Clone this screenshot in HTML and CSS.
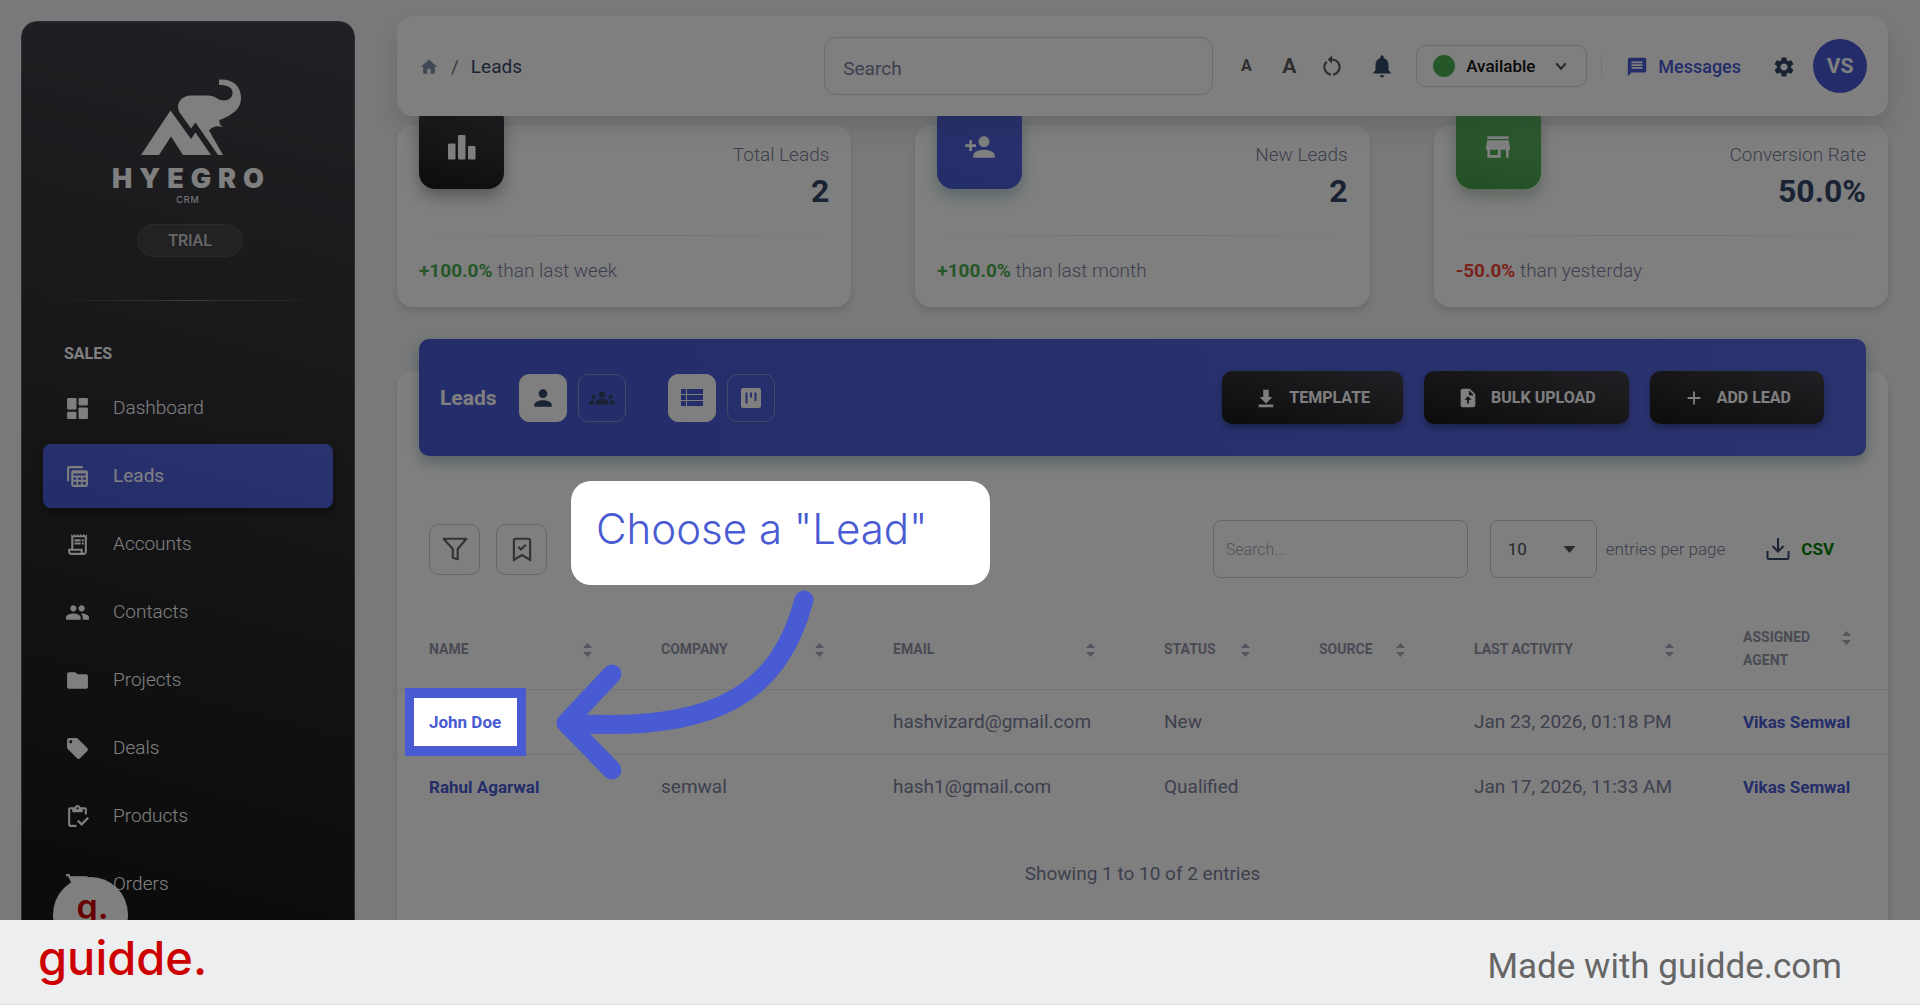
FILE: index.html
```html
<!DOCTYPE html>
<html lang="en">
<head>
<meta charset="utf-8">
<meta name="viewport" content="width=device-width, initial-scale=1">
<title>Leads - Hyegro CRM</title>
<link rel="stylesheet" href="styles.css">
</head>
<body>
<svg class="symbols" aria-hidden="true">
  <symbol id="sort" viewBox="0 0 9 14"><path d="M4.500 0 9 5H0zM4.500 14 0 9h9z"/></symbol>
</svg>
<div class="stage">
  <div class="app">
    <aside class="sidebar">
      <div class="brand">
        <svg class="brand-mark" viewBox="0 0 102 78" aria-hidden="true">
          <path d="M30.500 31.500 51 60l4.500-6.500L71 76H43L31 57.500 19 76H1z"/>
          <path d="M79 .5c13-1 22 6 22 18 0 11-7 17-21.500 22.500-.5 3 .5 5 3.500 7-6-1.500-9.500-1.500-14 3.500L83 76h-5L55.500 43.500 51 49.500 40 34c-5-8 0-17 11-17.500h17c8 0 9 5 16 5 6.500-.5 9-5 8.500-8.500-.5-4.500-5-7-13.500-7z"/>
        </svg>
        <div class="brand-name">HYEGRO</div>
        <div class="brand-sub">CRM</div>
        <span class="plan">TRIAL</span>
      </div>
      <div class="side-rule"></div>
      <div class="side-title">SALES</div>
      <nav class="menu">
        <a href="#"><svg viewBox="0 0 24 24"><rect x="2" y="2" width="9" height="11" rx="1"/><rect x="13" y="2" width="9" height="7" rx="1"/><rect x="2" y="15" width="9" height="7" rx="1"/><rect x="13" y="11" width="9" height="11" rx="1"/></svg>Dashboard</a>
        <a href="#" class="active"><svg viewBox="0 0 24 24"><path d="M3 16.500V4a1 1 0 0 1 1-1h13" fill="none" stroke="currentColor" stroke-width="2"/><path fill-rule="evenodd" d="M8 6h12a2 2 0 0 1 2 2v12a2 2 0 0 1-2 2H8a2 2 0 0 1-2-2V8c0-1.100.9-2 2-2zm0 3v2h12V9zm0 4v2h3v-2zm4.500 0v2h3v-2zm4.500 0v2h3v-2zm-9 4v3h3v-3zm4.500 0v3h3v-3zm4.500 0v3h3v-3z"/></svg>Leads</a>
        <a href="#"><svg viewBox="0 0 24 24"><path d="M19.500 3.500 18 2l-1.500 1.500L15 2l-1.500 1.500L12 2l-1.500 1.500L9 2 7.500 3.500 6 2v14H3v3c0 1.660 1.340 3 3 3h12c1.660 0 3-1.340 3-3V2l-1.500 1.500zM15 20H6c-.55 0-1-.45-1-1v-1h10v2zm4-1c0 .55-.45 1-1 1s-1-.45-1-1v-3H8V5h11v14z"/><path d="M9 7h6v2H9zM16 7h2v2h-2zM9 10h6v2H9zM16 10h2v2h-2z"/></svg>Accounts</a>
        <a href="#"><svg viewBox="0 0 24 24"><path d="M16 11c1.660 0 3-1.340 3-3s-1.340-3-3-3-3 1.340-3 3 1.340 3 3 3zm-8 0c1.660 0 3-1.340 3-3S9.660 5 8 5 5 6.340 5 8s1.340 3 3 3zm0 2c-2.330 0-7 1.170-7 3.500V19h14v-2.500c0-2.330-4.670-3.500-7-3.500zm8 0c-.29 0-.62.02-.97.05 1.160.84 1.970 1.970 1.970 3.450V19h6v-2.500c0-2.330-4.670-3.500-7-3.500z"/></svg>Contacts</a>
        <a href="#"><svg viewBox="0 0 24 24"><path d="M10 4H4c-1.100 0-2 .9-2 2v12c0 1.100.9 2 2 2h16c1.100 0 2-.9 2-2V8c0-1.100-.9-2-2-2h-8l-2-2z"/></svg>Projects</a>
        <a href="#"><svg viewBox="0 0 24 24"><path d="M21.410 11.580l-9-9C12.050 2.220 11.550 2 11 2H4c-1.100 0-2 .9-2 2v7c0 .55.22 1.050.59 1.420l9 9c.36.36.86.58 1.410.58s1.050-.22 1.410-.59l7-7c.37-.36.59-.86.59-1.410s-.23-1.060-.59-1.420zM5.500 7C4.670 7 4 6.330 4 5.500S4.670 4 5.500 4 7 4.670 7 5.500 6.330 7 5.500 7z"/></svg>Deals</a>
        <a href="#"><svg viewBox="0 0 24 24"><path d="M5 5h2v3h10V5h2v5h2V5c0-1.100-.9-2-2-2h-4.180C14.400 1.840 13.300 1 12 1s-2.400.84-2.820 2H5c-1.100 0-2 .9-2 2v15c0 1.100.9 2 2 2h6v-2H5V5zm7-2c.55 0 1 .45 1 1s-.45 1-1 1-1-.45-1-1 .45-1 1-1zM21.500 12.500 16 18l-3-3-1.500 1.500L16 21l7-7z"/></svg>Products</a>
        <a href="#"><svg viewBox="0 0 24 24"><path d="M7 18c-1.100 0-2 .9-2 2s.9 2 2 2 2-.9 2-2-.9-2-2-2zM1 2v2h2l3.600 7.590-1.350 2.450C4.520 15.370 5.480 17 7 17h12v-2H7.420l1.130-2h7.450c.75 0 1.410-.41 1.750-1.030L22 4H5.210L4.270 2zm16 16c-1.100 0-2 .9-2 2s.9 2 2 2 2-.9 2-2-.9-2-2-2z"/></svg>Orders</a>
      </nav>
    </aside>

    <main class="main">
      <header class="topbar">
        <nav class="crumbs">
          <a href="#" aria-label="Home"><svg viewBox="0 0 24 24" class="i20"><path d="M10 20v-6h4v6h5v-8h3L12 3 2 12h3v8z"/></svg></a>
          <span class="slash">/</span>
          <span>Leads</span>
        </nav>
        <input class="search" type="search" placeholder="Search" aria-label="Search">
        <div class="tools">
          <button class="font-small" aria-label="Decrease text size">A</button>
          <button class="font-large" aria-label="Increase text size">A</button>
          <button class="reset" aria-label="Reset text size"><svg viewBox="0 0 24 24" class="i26"><path d="M12 5V2L8 6l4 4V7c3.310 0 6 2.690 6 6 0 2.970-2.170 5.430-5 5.910v2.020c3.950-.49 7-3.850 7-7.930 0-4.420-3.580-8-8-8zm-6 8c0-1.650.67-3.150 1.760-4.240L6.340 7.340C4.900 8.790 4 10.790 4 13c0 4.080 3.050 7.440 7 7.930v-2.020c-2.830-.48-5-2.940-5-5.910z"/></svg></button>
          <button class="navy" aria-label="Notifications"><svg viewBox="0 0 24 24" class="i26"><path d="M12 22.500c1.100 0 2-.9 2-2h-4c0 1.100.89 2 2 2zm6-6.500v-5c0-3.070-1.640-5.640-4.500-6.320V3.500c0-.83-.67-1.500-1.500-1.500s-1.500.67-1.500 1.500v1.180C7.630 5.360 6 7.920 6 11v5l-2 2v1h16v-1l-2-2z"/></svg></button>
        </div>
        <button class="status"><span class="dot"></span>Available<svg viewBox="0 0 24 24" class="i20"><path d="M5 8l7 8 7-8" fill="none" stroke="currentColor" stroke-width="3"/></svg></button>
        <span class="bar-rule"></span>
        <a href="#" class="messages"><svg viewBox="0 0 24 24" class="i22"><path d="M20 2H4c-1.100 0-2 .9-2 2v18l4-4h14c1.100 0 2-.9 2-2V4c0-1.100-.9-2-2-2zm-2 12H6v-2h12v2zm0-3H6V9h12v2zm0-3H6V6h12v2z"/></svg>Messages</a>
        <button class="navy gear" aria-label="Settings"><svg viewBox="0 0 24 24" class="i24"><path d="M19.140 12.940c.04-.3.06-.61.06-.94 0-.32-.02-.64-.07-.94l2.030-1.580c.18-.14.23-.41.12-.61l-1.920-3.320c-.12-.22-.37-.29-.59-.22l-2.390.96c-.5-.38-1.030-.7-1.620-.94l-.36-2.540c-.04-.24-.24-.41-.48-.41h-3.840c-.24 0-.43.17-.47.41l-.36 2.540c-.59.24-1.130.57-1.620.94l-2.390-.96c-.22-.08-.47 0-.59.22L2.740 8.870c-.12.21-.08.47.12.61l2.030 1.580c-.05.3-.09.63-.09.94s.02.64.07.94l-2.030 1.580c-.18.14-.23.41-.12.61l1.920 3.320c.12.22.37.29.59.22l2.390-.96c.5.38 1.030.7 1.620.94l.36 2.540c.05.24.24.41.48.41h3.840c.24 0 .44-.17.47-.41l.36-2.540c.59-.24 1.130-.56 1.620-.94l2.390.96c.22.08.47 0 .59-.22l1.920-3.320c.12-.22.07-.47-.12-.61l-2.010-1.580zM12 15.600c-1.980 0-3.600-1.620-3.600-3.600s1.620-3.600 3.600-3.600 3.600 1.620 3.600 3.600-1.620 3.600-3.600 3.600z"/></svg></button>
        <button class="avatar">VS</button>
      </header>

      <section class="stats">
        <article class="stat">
          <div class="stat-top">
            <span class="stat-icon dark"><svg viewBox="0 0 28 28"><rect x="0" y="10.500" width="7.500" height="16" rx="1"/><rect x="10" y="2" width="7.500" height="24.500" rx="1"/><rect x="20" y="13" width="7.500" height="13.500" rx="1"/></svg></span>
            <div class="stat-text"><span class="stat-label">Total Leads</span><strong>2</strong></div>
          </div>
          <div class="stat-rule"></div>
          <p><b class="up">+100.0%</b> than last week</p>
        </article>
        <article class="stat">
          <div class="stat-top">
            <span class="stat-icon blue"><svg viewBox="0 0 24 24" class="i32"><path d="M15 12c2.210 0 4-1.790 4-4s-1.790-4-4-4-4 1.790-4 4 1.790 4 4 4zm-9-2V7H4v3H1v2h3v3h2v-3h3v-2H6zm9 4c-2.670 0-8 1.340-8 4v2h16v-2c0-2.660-5.330-4-8-4z"/></svg></span>
            <div class="stat-text"><span class="stat-label">New Leads</span><strong>2</strong></div>
          </div>
          <div class="stat-rule"></div>
          <p><b class="up">+100.0%</b> than last month</p>
        </article>
        <article class="stat">
          <div class="stat-top">
            <span class="stat-icon green"><svg viewBox="0 0 24 24" class="i32"><path d="M20 4H4v2h16V4zm1 10v-2l-1-5H4l-1 5v2h1v6h10v-6h4v6h2v-6h1zm-9 4H6v-4h6v4z"/></svg></span>
            <div class="stat-text"><span class="stat-label">Conversion Rate</span><strong>50.0%</strong></div>
          </div>
          <div class="stat-rule"></div>
          <p><b class="down">-50.0%</b> than yesterday</p>
        </article>
      </section>

      <section class="panel">
        <div class="banner">
          <h1>Leads</h1>
          <div class="toggle">
            <button class="tile on" aria-label="My leads"><svg viewBox="0 0 24 24" class="i26"><path d="M12 12c2.210 0 4-1.790 4-4s-1.790-4-4-4-4 1.790-4 4 1.790 4 4 4zm0 2c-2.670 0-8 1.340-8 4v2h16v-2c0-2.660-5.330-4-8-4z"/></svg></button>
            <button class="tile" aria-label="Team leads"><svg viewBox="0 0 24 24" class="i26"><path d="M12 12.750c1.630 0 3.070.39 4.240.9 1.080.48 1.760 1.560 1.760 2.730V18H6v-1.610c0-1.180.68-2.260 1.760-2.730 1.170-.52 2.610-.91 4.240-.91zM4 13c1.100 0 2-.9 2-2s-.9-2-2-2-2 .9-2 2 .9 2 2 2zm1.130 1.100C4.760 14.040 4.390 14 4 14c-.99 0-1.930.21-2.780.58C.48 14.900 0 15.620 0 16.430V18h4.500v-1.610c0-.83.23-1.610.63-2.290zM20 13c1.100 0 2-.9 2-2s-.9-2-2-2-2 .9-2 2 .9 2 2 2zm4 3.430c0-.81-.48-1.530-1.220-1.850-.85-.37-1.790-.58-2.780-.58-.39 0-.76.04-1.130.1.4.68.63 1.460.63 2.290V18H24v-1.570zM12 6c1.660 0 3 1.340 3 3s-1.340 3-3 3-3-1.340-3-3 1.340-3 3-3z"/></svg></button>
          </div>
          <div class="toggle">
            <button class="tile on list" aria-label="List view"><svg viewBox="0 0 22 18" class="list-icon"><path d="M0 0h5v5H0zM6 0h16v5H6zM0 6h5v5H0zM6 6h16v5H6zM0 12h5v5H0zM6 12h16v5H6z"/></svg></button>
            <button class="tile board" aria-label="Board view"><svg viewBox="0 0 20 20" class="i20"><path fill-rule="evenodd" d="M2 0h16a2 2 0 0 1 2 2v16a2 2 0 0 1-2 2H2a2 2 0 0 1-2-2V2C0 .9.900 0 2 0zm2.500 4.500v11h2v-11zm4.500 0v5h2v-5zm4.500 0v8.500h2V4.500z"/></svg></button>
          </div>
          <div class="actions">
            <button><svg viewBox="0 0 24 24" class="i22"><path d="M19 11h-4V3H9v8H5l7 7zM4 19h16v3H4z"/></svg>TEMPLATE</button>
            <button><svg viewBox="0 0 24 24" class="i22"><path fill-rule="evenodd" d="M14 2H6a2 2 0 0 0-2 2v16c0 1.100.9 2 2 2h12a2 2 0 0 0 2-2V8zm-1 7V3.500L18.500 9zM11 18v-4H8l4-4 4 4h-3v4z"/></svg>BULK UPLOAD</button>
            <button><svg viewBox="0 0 24 24" class="i22"><path d="M19 13h-6v6h-2v-6H5v-2h6V5h2v6h6z"/></svg>ADD LEAD</button>
          </div>
        </div>

        <div class="filters">
          <button class="outline" aria-label="Filter"><svg viewBox="0 0 24 24" class="i26"><path d="M1.500 2.500h21L14.500 12v9.500L10 20v-8z" fill="none" stroke="currentColor" stroke-width="2" stroke-linejoin="round"/></svg></button>
          <button class="outline" aria-label="Saved views"><svg viewBox="0 0 24 24" class="i26"><path d="M4.500 22V4c0-1 .5-1.500 1.500-1.500h12c1 0 1.500.5 1.500 1.500v18L12 17.500zM8.500 10l2.500 2.500L15.500 8" fill="none" stroke="currentColor" stroke-width="2"/></svg></button>
          <input class="table-search" type="search" placeholder="Search..." aria-label="Search leads">
          <div class="page-size">
            <select id="page-size"><option>10</option><option>25</option></select>
            <svg viewBox="0 0 12 7" aria-hidden="true"><path d="M0 0h12L6 7z"/></svg>
          </div>
          <label for="page-size">entries per page</label>
          <button class="csv"><svg viewBox="0 0 24 24" class="i24"><path d="M12 1v13M6.500 9l5.500 5.500L17.500 9M1.500 14v6.500c0 1 .5 1.500 1.500 1.500h18c1 0 1.500-.5 1.500-1.500V14" fill="none" stroke="currentColor" stroke-width="2"/></svg>CSV</button>
        </div>

        <table class="leads">
          <colgroup><col class="w-name"><col class="w-company"><col class="w-email"><col class="w-short"><col class="w-short"><col class="w-date"><col></colgroup>
          <thead>
            <tr>
              <th><div>Name<svg><use href="#sort"/></svg></div></th>
              <th><div>Company<svg><use href="#sort"/></svg></div></th>
              <th><div>Email<svg><use href="#sort"/></svg></div></th>
              <th><div>Status<svg><use href="#sort"/></svg></div></th>
              <th><div>Source<svg><use href="#sort"/></svg></div></th>
              <th><div>Last activity<svg><use href="#sort"/></svg></div></th>
              <th><div>Assigned agent<svg><use href="#sort"/></svg></div></th>
            </tr>
          </thead>
          <tbody>
            <tr><td><a href="#">John Doe</a></td><td></td><td>hashvizard@gmail.com</td><td>New</td><td></td><td>Jan 23, 2026, 01:18 PM</td><td><a href="#">Vikas Semwal</a></td></tr>
            <tr><td><a href="#">Rahul Agarwal</a></td><td>semwal</td><td>hash1@gmail.com</td><td>Qualified</td><td></td><td>Jan 17, 2026, 11:33 AM</td><td><a href="#">Vikas Semwal</a></td></tr>
          </tbody>
        </table>
        <p class="summary">Showing 1 to 10 of 2 entries</p>
      </section>
    </main>
  </div>

  <button class="bubble" aria-label="Open guide">g.</button>

  <div class="spotlight"></div>
  <div class="callout">Choose a "Lead"</div>
  <svg class="arrow" viewBox="0 0 270 200" aria-hidden="true"><path d="M254 20C230 110 170 154 16 143M62 94 16 143 62 190"/></svg>
</div>

<footer class="credit">
  <span class="guidde">guidde.</span>
  <span class="made">Made with guidde.com</span>
</footer>
</body>
</html>
```

FILE: styles.css
```css
:root {
  --blue: #485bd3;
  --navy: #344767;
  --grey: #7b809a;
  --line: #d2d6da;
}

* { box-sizing: border-box; }

body {
  margin: 0;
  height: 100vh;
  display: flex;
  flex-direction: column;
  overflow: hidden;
  background: #f0f2f5;
  color: var(--grey);
  font: 400 19px/28px Roboto, "Liberation Sans", sans-serif;
}

svg { display: block; flex: none; fill: currentColor; }
a { color: inherit; text-decoration: none; }
p, h1 { margin: 0; }

button, input, select { font: inherit; color: inherit; }

button {
  display: flex;
  align-items: center;
  justify-content: center;
  padding: 0;
  border: 0;
  background: none;
}

.symbols { position: absolute; width: 0; height: 0; }

.i20 { width: 20px; height: 20px; }
.i22 { width: 22px; height: 22px; }
.i24 { width: 24px; height: 24px; }
.i26 { width: 26px; height: 26px; }

.stage {
  position: relative;
  flex: 1;
  min-height: 0;
  overflow: hidden;
}

.app {
  display: flex;
  gap: 42px;
  height: 100%;
  padding: 0 32px 0 21px;
}

/* Sidebar */
.sidebar {
  flex: none;
  width: 334px;
  height: 100%;
  margin-top: 21px;
  padding: 0 22px;
  border: 1px solid #5a5a60;
  border-radius: 16px;
  background: linear-gradient(195deg, #42424a, #191919 90%);
  color: #fff;
}

.brand {
  display: flex;
  flex-direction: column;
  align-items: center;
  padding-top: 57px;
}

.brand-mark { width: 102px; height: 78px; margin-left: 6px; }

.brand-name {
  margin-top: 6px;
  padding-left: 7px;
  font: 900 27px/32px Inter, sans-serif;
  letter-spacing: 7px;
}

.brand-sub {
  font: 400 9px/10px Inter, sans-serif;
  letter-spacing: 1px;
}

.plan {
  width: 106px;
  margin: 19px 0 0 4px;
  border: 1px solid #55555a;
  border-radius: 17px;
  background: rgba(255, 255, 255, 0.08);
  color: #d0d0d0;
  font-size: 16px;
  font-weight: 500;
  line-height: 31px;
  text-align: center;
}

.side-rule {
  height: 1px;
  margin-top: 43px;
  background: linear-gradient(90deg, transparent, #77777c, transparent);
}

.side-title {
  margin: 39px 20px 8px;
  font-size: 16px;
  font-weight: 700;
}

.menu { display: grid; gap: 4px; }

.menu a {
  display: flex;
  align-items: center;
  gap: 23px;
  height: 64px;
  margin: 0 -1px;
  padding-left: 22px;
  border-radius: 8px;
  font-weight: 300;
}

.menu svg { width: 25px; height: 25px; }

.menu .active {
  background: linear-gradient(195deg, #5767df, #485bd3);
  box-shadow: 0 4px 10px rgba(0, 0, 0, 0.4);
  font-weight: 400;
}

/* Main column */
.main {
  flex: 1;
  min-width: 0;
  display: flex;
  flex-direction: column;
}

.topbar {
  position: relative;
  z-index: 1;
  display: flex;
  align-items: center;
  flex: none;
  height: 100px;
  margin-top: 16px;
  padding: 0 21px 0 22px;
  border-radius: 16px;
  background: #fff;
  box-shadow: 0 12px 24px rgba(0, 0, 0, 0.12);
}

.crumbs {
  display: flex;
  align-items: center;
  gap: 12px;
  margin-right: auto;
  padding-top: 2px;
  color: var(--navy);
}

.crumbs a { color: #8392ab; }
.slash { color: #6c757d; }

.search {
  width: 389px;
  height: 58px;
  margin-right: 26px;
  padding: 4px 18px 0;
  border: 1px solid var(--line);
  border-radius: 12px;
  background: transparent;
}

input::placeholder { color: var(--grey); opacity: 1; }

.tools { display: flex; align-items: center; color: #5c5c5c; }
.font-small { width: 14px; margin-right: 28px; font-size: 16px; font-weight: 700; }
.font-large { width: 16px; margin-right: 22px; font-size: 21px; font-weight: 700; }
.reset { margin-right: 24px; }
.navy { color: var(--navy); }

.status {
  width: 171px;
  height: 42px;
  margin-left: 21px;
  padding: 0 17px 0 16px;
  gap: 11px;
  border: 1px solid var(--line);
  border-radius: 10px;
  color: #111;
  font-size: 17px;
  font-weight: 500;
}

.status svg { width: 16px; margin-left: auto; color: #444; }
.dot { width: 22px; height: 22px; border-radius: 50%; background: #4caf50; }

.bar-rule {
  width: 1px;
  height: 32px;
  margin: 0 24px 0 14px;
  background: linear-gradient(transparent, #dcdcdc, transparent);
}

.messages {
  display: flex;
  align-items: center;
  gap: 10px;
  padding-top: 2px;
  color: var(--blue);
  font-size: 18px;
  font-weight: 500;
}

.gear { margin: 0 17px 0 31px; padding-top: 2px; }

.avatar {
  width: 54px;
  height: 54px;
  border-radius: 50%;
  background: var(--blue);
  color: #fff;
  font-size: 21px;
  font-weight: 700;
}

.stats {
  display: grid;
  grid-template-columns: repeat(3, 1fr);
  gap: 64px;
  margin-top: 9px;
}

.stat {
  height: 182px;
  padding: 0 22px;
  border-radius: 16px;
  background: #fff;
  box-shadow: 0 4px 7px rgba(0, 0, 0, 0.12);
  font-weight: 300;
}

.stat-top {
  display: flex;
  justify-content: space-between;
  height: 110px;
}

.stat-icon {
  display: grid;
  place-items: center;
  width: 85px;
  height: 85px;
  margin-top: -21px;
  border-radius: 16px;
  color: #fff;
}

.stat-icon svg { width: 28px; height: 28px; }
.stat-icon .i32 { width: 32px; height: 32px; }

.dark {
  background: linear-gradient(195deg, #42424a, #191919);
  box-shadow: 0 8px 16px rgba(0, 0, 0, 0.3);
}

.blue {
  background: linear-gradient(195deg, #5767df, #485bd3);
  box-shadow: 0 8px 16px rgba(0, 90, 110, 0.3);
}

.green {
  background: linear-gradient(195deg, #66bb6a, #43a047);
  box-shadow: 0 8px 16px rgba(30, 90, 40, 0.3);
}

.stat-text {
  display: flex;
  flex-direction: column;
  padding-top: 16px;
  text-align: right;
}

.stat-text strong {
  color: var(--navy);
  font-size: 32px;
  font-weight: 700;
  line-height: 44px;
}

.stat-rule {
  height: 1px;
  margin-bottom: 21px;
  background: linear-gradient(90deg, transparent, #ddd, transparent);
}

.stat b { font-weight: 700; }
.up { color: #4caf50; }
.down { color: #f44335; }

/* Leads panel */
.panel {
  flex: 1 0 auto;
  margin-top: 64px;
  border-radius: 16px;
  background: #fff;
  box-shadow: 0 4px 7px rgba(0, 0, 0, 0.12);
}

.banner {
  display: flex;
  align-items: center;
  height: 117px;
  margin: -32px 22px 0;
  padding: 0 42px 0 21px;
  border-radius: 10px;
  background: linear-gradient(75deg, #485bd3, #5767df);
  box-shadow: 0 4px 20px rgba(0, 0, 0, 0.1), 0 7px 12px rgba(0, 90, 100, 0.22);
}

.banner h1 {
  width: 79px;
  color: #fff;
  font-size: 21px;
  font-weight: 700;
}

.toggle { display: flex; gap: 11px; margin-right: 42px; }

.tile {
  width: 48px;
  height: 48px;
  border: 1px solid #8b93d0;
  border-radius: 10px;
  color: var(--navy);
}

.tile.on { border-color: #fff; background: #fff; }
.tile.list { color: var(--blue); }
.tile.board { color: #fff; }
.list-icon { width: 22px; height: 18px; }

.actions { display: flex; gap: 21px; margin-left: auto; }

.actions button {
  gap: 12px;
  height: 53px;
  padding: 0 33px;
  border-radius: 10px;
  background: linear-gradient(195deg, #42424a, #191919);
  box-shadow: 0 4px 6px rgba(0, 0, 0, 0.3);
  color: #fff;
  font-size: 16px;
  font-weight: 700;
}

.filters {
  display: flex;
  align-items: center;
  height: 58px;
  margin: 64px 54px 0 32px;
  font-size: 17px;
  font-weight: 300;
}

.outline {
  width: 51px;
  height: 51px;
  margin-right: 16px;
  border: 1px solid #c8ccd0;
  border-radius: 10px;
  color: #666;
}

.table-search {
  width: 255px;
  height: 58px;
  margin: 0 22px 0 auto;
  padding: 0 12px;
  border: 1px solid #c8ccd0;
  border-radius: 8px;
  background: transparent;
  font-size: 16px;
}

.table-search::placeholder { color: #a0a4b4; }

.page-size { position: relative; margin-right: 9px; }

.page-size select {
  width: 107px;
  height: 58px;
  padding: 0 17px;
  border: 1px solid #c8ccd0;
  border-radius: 8px;
  background: transparent;
  appearance: none;
  color: #495057;
  font-weight: 400;
}

.page-size svg {
  position: absolute;
  top: 26px;
  right: 21px;
  width: 13px;
  height: 7px;
  color: #555;
}

.csv {
  gap: 11px;
  margin-left: 41px;
  color: green;
  font-weight: 700;
}

.csv svg { color: var(--navy); }

.leads {
  width: 100%;
  margin-top: 32px;
  border-collapse: collapse;
  table-layout: fixed;
}

.w-name, .w-company { width: 232px; }
.w-email { width: 271px; }
.w-short { width: 155px; }
.w-date { width: 269px; }

.leads th {
  height: 79px;
  padding: 0 32px;
  color: #9396a8;
  font-size: 14px;
  font-weight: 700;
  line-height: 23px;
  text-align: left;
  text-transform: uppercase;
}

.leads th div { display: flex; justify-content: space-between; }
.leads th svg { width: 9px; height: 14px; margin: 5px 5px 0 14px; color: #a9acba; }

.leads td {
  height: 65px;
  padding: 0 0 0 32px;
  white-space: nowrap;
}

.leads tr { border-bottom: 1px solid #e9eaee; }
.leads tbody tr:last-child { border-bottom: 0; }

.leads td a { color: var(--blue); font-size: 17px; font-weight: 700; }

.summary { padding: 41px 0 60px; text-align: center; }

/* Guide overlay */
.bubble {
  position: absolute;
  left: 53px;
  bottom: -32px;
  width: 75px;
  height: 75px;
  align-items: flex-start;
  padding: 12px 0 0 4px;
  border-radius: 50%;
  background: #fff;
  color: #c00;
  font: 600 34px/36px Inter, sans-serif;
}

.spotlight {
  position: absolute;
  z-index: 2;
  left: 405px;
  top: 688px;
  width: 121px;
  height: 68px;
  border: solid var(--blue);
  border-width: 10px 9px;
  box-shadow: 0 0 0 200vmax rgba(0, 0, 0, 0.5);
}

.callout {
  position: absolute;
  z-index: 3;
  left: 571px;
  top: 481px;
  width: 419px;
  padding: 18px 25px 26px;
  border-radius: 20px;
  background: #fff;
  color: var(--blue);
  font: 300 42px/60px Inter, sans-serif;
  white-space: nowrap;
}

.arrow {
  position: absolute;
  z-index: 3;
  left: 550px;
  top: 580px;
  width: 270px;
  height: 200px;
  fill: none;
  stroke: var(--blue);
  stroke-width: 19;
  stroke-linecap: round;
  stroke-linejoin: round;
}

/* Credit strip */
.credit {
  display: flex;
  flex: none;
  align-items: center;
  justify-content: space-between;
  height: 85px;
  padding: 0 78px 0 38px;
  border-bottom: 1px solid #dfe0e2;
  background: #edeef0;
}

.guidde {
  padding-bottom: 8px;
  color: #c00;
  font: 500 47px/56px Inter, sans-serif;
}

.made {
  padding-top: 9px;
  color: #666;
  font-size: 35px;
  line-height: 40px;
}
```
